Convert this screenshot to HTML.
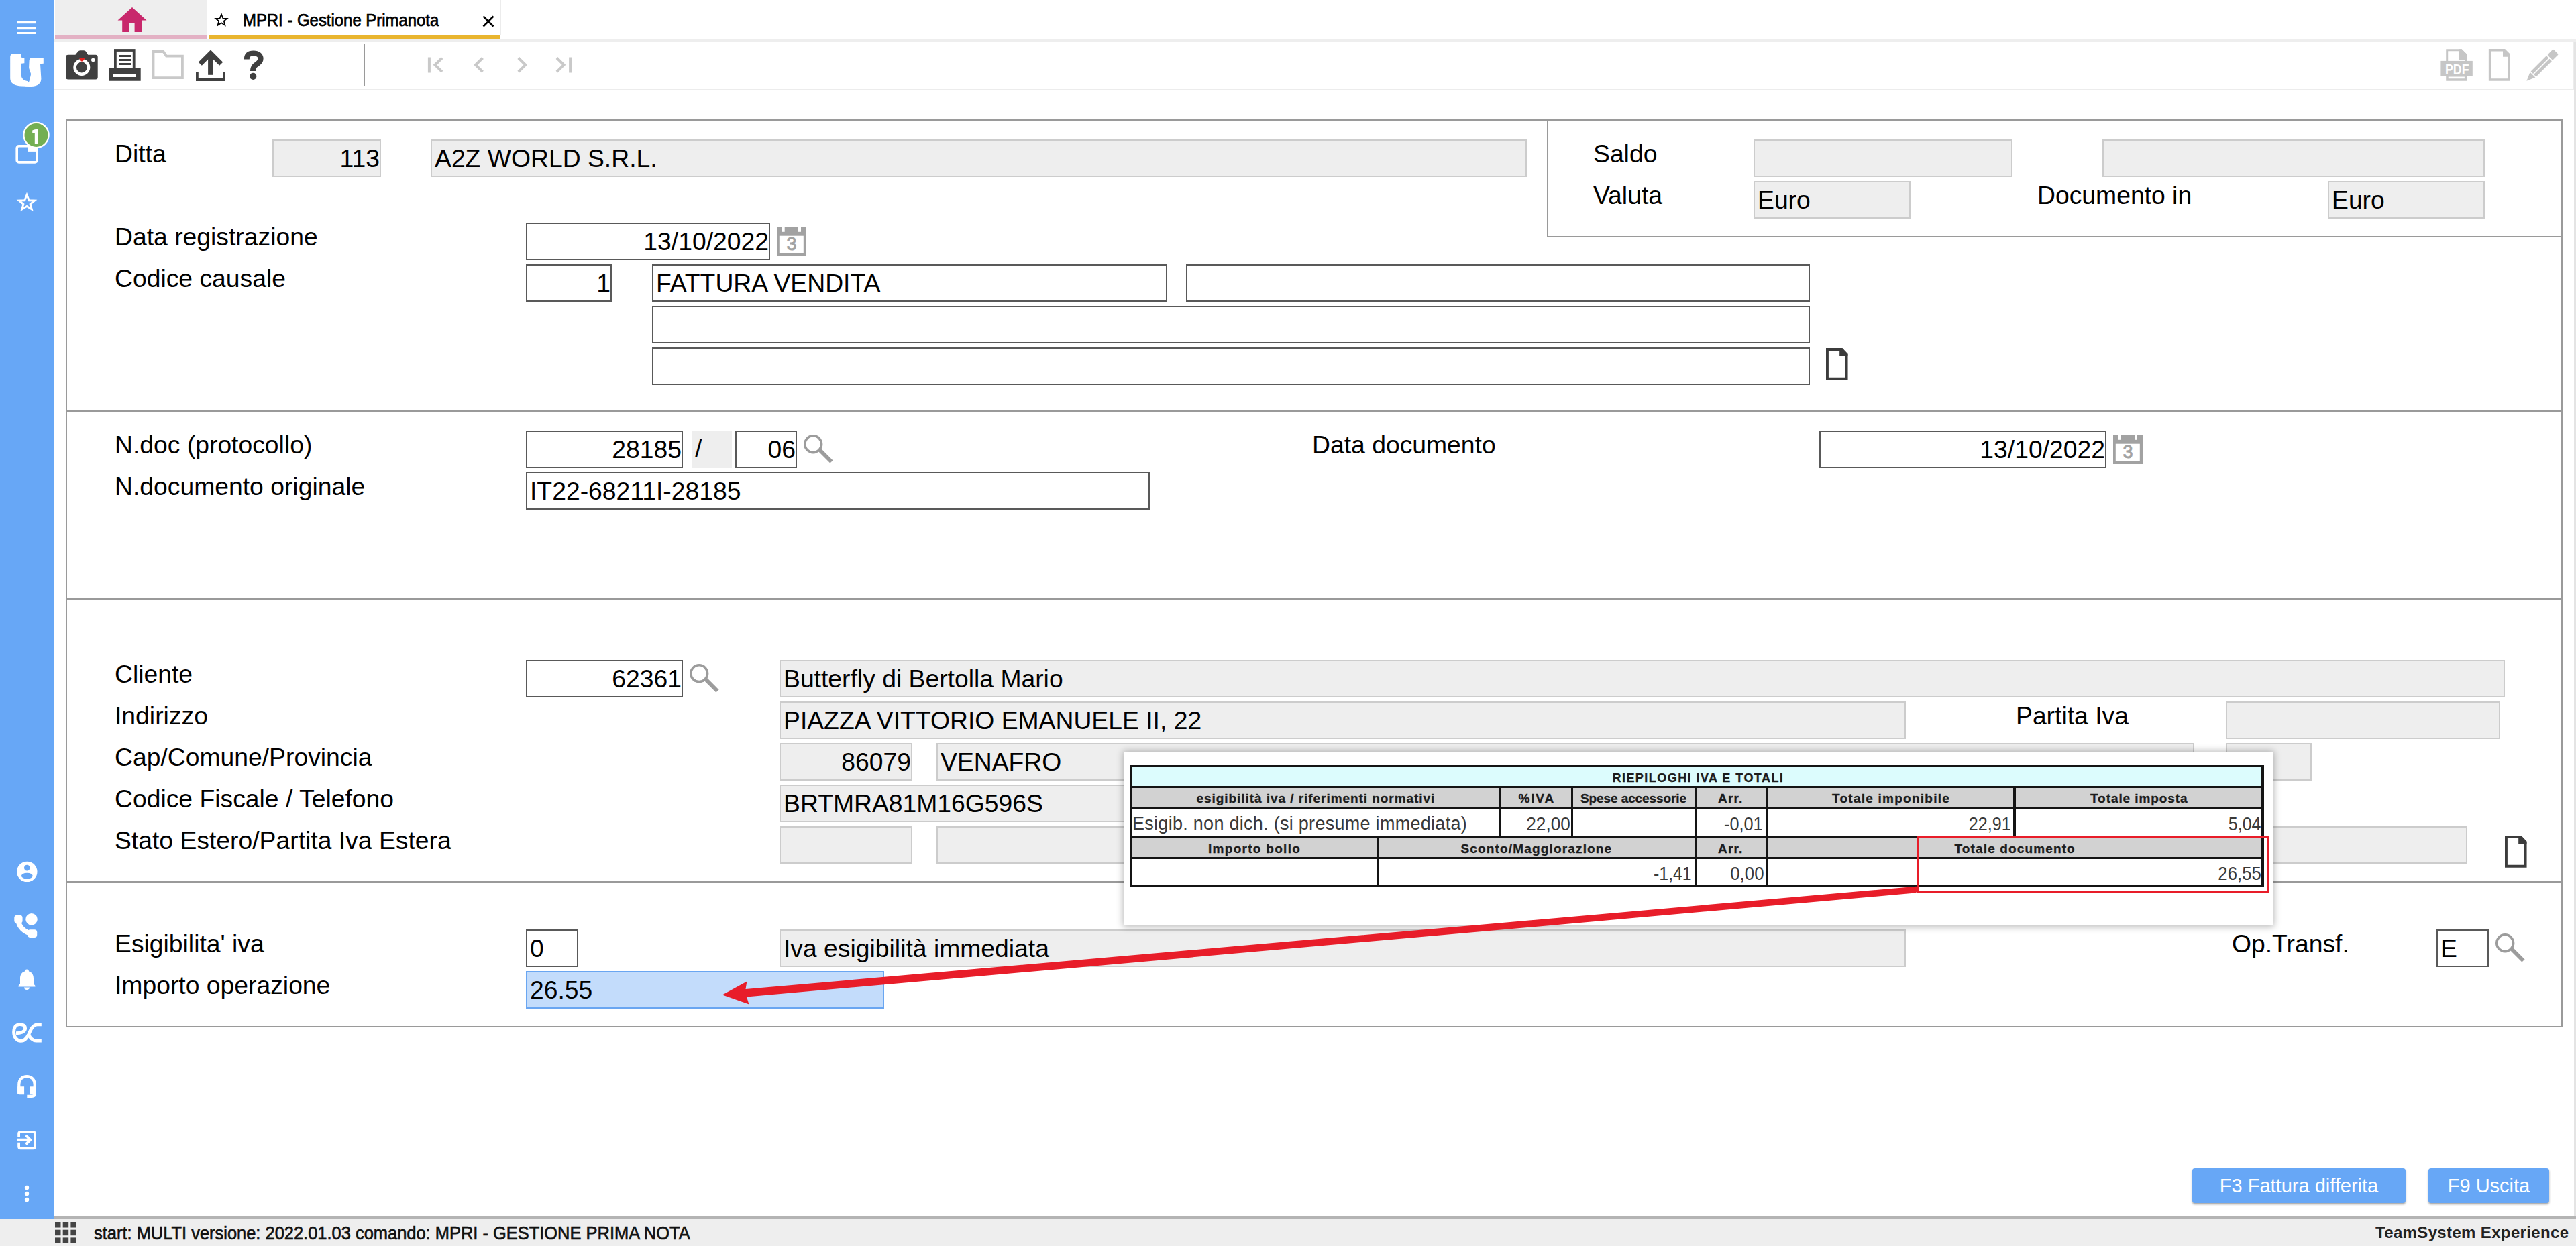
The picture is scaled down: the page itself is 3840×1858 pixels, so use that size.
<!DOCTYPE html><html><head><meta charset="utf-8"><title>MPRI - Gestione Primanota</title><style>
*{margin:0;padding:0;box-sizing:border-box}
html,body{width:3840px;height:1858px;overflow:hidden;background:#fff;font-family:"Liberation Sans",sans-serif;color:#000}
.ab{position:absolute}
.f{position:absolute;height:56px;font-size:37.3px;line-height:52px;padding:0 0 0 4px;white-space:nowrap;overflow:hidden}
.ro{background:#eeeeee;border:2px solid #cccccc}
.ed{background:#fff;border:2px solid #595959}
.r{text-align:right}
.lb{position:absolute;font-size:37.3px;line-height:41px;white-space:nowrap}
.hl{position:absolute;background:#9a9a9a}
</style></head><body>
<div class="ab" style="left:0;top:0;width:80px;height:1817px;background:#67a7f6"></div>
<div class="ab" style="left:0;top:1817px;width:3840px;height:41px;background:#eeeeee"></div>
<div class="ab" style="left:80px;top:1814px;width:3760px;height:3px;background:#b4b4b4"></div>
<div class="ab" style="left:82px;top:0;width:226px;height:58px;background:#eeeeee"></div>
<div class="ab" style="left:82px;top:52px;width:226px;height:6px;background:#e3b1c4"></div>
<div class="ab" style="left:312px;top:52px;width:434px;height:6px;background:#e9b52f"></div>
<div class="ab" style="left:80px;top:58px;width:3760px;height:4px;background:#eeeeee"></div>
<div class="ab" style="left:80px;top:132px;width:3757px;height:2px;background:#ececec"></div>
<div class="ab" style="left:3836px;top:62px;width:1px;height:72px;background:#ececec"></div>
<div class="ab" style="left:3837px;top:62px;width:3px;height:1752px;background:#e4e4e4"></div>
<div class="ab" style="left:746px;top:0;width:1px;height:52px;background:#ececec"></div>
<div class="ab" style="left:542px;top:66px;width:2px;height:62px;background:#9a9a9a"></div>
<div class="ab" style="left:361.5px;top:13.6px;font-size:26.3px;line-height:32px;-webkit-text-stroke:0.75px #000;white-space:nowrap;transform-origin:0 0;transform:scaleX(0.909)">MPRI - Gestione Primanota</div>
<svg class="ab" style="left:20px;top:25px" width="40" height="35" viewBox="20 25 40 35"><rect x="26" y="32" width="28" height="3.2" fill="#fff"/><rect x="26" y="40" width="28" height="3.2" fill="#fff"/><rect x="26" y="47" width="28" height="3.2" fill="#fff"/></svg>
<svg class="ab" style="left:10px;top:75px" width="60" height="60" viewBox="10 75 60 60"><path fill="#fff" d="M15.2,85 C15.2,81.5 17.5,80.3 21,80.3 L31.6,80.3 L31.6,85.6 L36.4,87 L36.4,94.2 L32,94.7 L32,113.5 C32,117 36,120.5 41.7,121.2 L46,128.9 L32,128.4 C22,128.4 15.2,124 15.2,117 Z"/><path fill="#fff" d="M43.6,90 C44,87 46,86 48,86 L64.8,86 L64.8,94.7 L60,95.2 L61.4,117.3 C61.4,124 57,128.9 46.5,128.9 L37,128.6 C42,126 44.1,121 44.1,118.3 C45.5,114 46,112 46,110 C45,106 43.1,103 43.1,100.5 Z"/></svg>
<svg class="ab" style="left:15px;top:175px" width="70" height="75" viewBox="15 175 70 75"><rect x="25.2" y="217.8" width="29.9" height="24.1" rx="3" fill="none" stroke="#fff" stroke-width="3.6"/><rect x="41.5" y="219" width="13.6" height="6.9" fill="#fff"/><circle cx="54" cy="201.5" r="18.6" fill="#74af53" stroke="#fff" stroke-width="2.2"/><path fill="#fff" d="M50.8,193.5 L56.6,192.2 L56.6,214.2 L51.8,214.2 L51.8,198 L48.2,198.6 L48.2,194.5 Z"/></svg>
<svg class="ab" style="left:20px;top:283px" width="40" height="38" viewBox="20 283 40 38"><path transform="translate(40,300.6) scale(0.92) translate(-40,-301.5)" fill="none" stroke="#fff" stroke-width="3.1" stroke-linejoin="miter" d="M40,290.5 L43.6,299.5 L52.5,299.8 L45.5,305.5 L48,314 L40,309 L32,314 L34.5,305.5 L27.5,299.8 L36.4,299.5 Z"/></svg>
<svg class="ab" style="left:20px;top:1280px" width="40" height="40" viewBox="20 1280 40 40"><circle cx="40.3" cy="1299.9" r="15.2" fill="#fff"/><circle cx="40.3" cy="1294.1" r="4.3" fill="#67a7f6"/><ellipse cx="40.3" cy="1306.1" rx="8.4" ry="4.3" fill="#67a7f6"/></svg>
<svg class="ab" style="left:16px;top:1356px" width="46" height="46" viewBox="16 1356 46 46"><circle cx="47" cy="1370.8" r="8.8" fill="#fff"/><path fill="none" stroke="#fff" stroke-width="7.5" d="M27.2,1372 C28,1382 36,1390 48,1392.5"/><rect x="21.3" y="1364.8" width="12.3" height="12" rx="4" fill="#fff"/><rect x="41.2" y="1386.3" width="14" height="11.8" rx="4" fill="#fff"/></svg>
<svg class="ab" style="left:20px;top:1440px" width="40" height="40" viewBox="20 1440 40 40"><path fill="#fff" d="M40,1445.5 C42,1445.5 43,1447 43,1448.5 C48,1450 50,1454 50,1459 L50,1467 L52.5,1470 L52.5,1471.5 L27.5,1471.5 L27.5,1470 L30,1467 L30,1459 C30,1454 32,1450 37,1448.5 C37,1447 38,1445.5 40,1445.5 Z"/><path fill="#fff" d="M36,1472.5 L44,1472.5 C44,1474.5 42.5,1476 40,1476 C37.5,1476 36,1474.5 36,1472.5 Z"/></svg>
<svg class="ab" style="left:14px;top:1518px" width="52" height="42" viewBox="14 1518 52 42"><path fill="none" stroke="#fff" stroke-width="4.9" d="M24,1540.8 C30,1540.8 37.6,1539 37.6,1533.5 C37.6,1528.5 33.5,1527.6 29.5,1527.6 C23,1527.6 20.6,1533 20.6,1539 C20.6,1547 25.5,1552.3 31,1552.3 C37,1552.3 40,1548 43,1542 C46,1535 49,1527.9 56,1527.9 L61.8,1527.9"/><path fill="none" stroke="#fff" stroke-width="4.9" d="M42.3,1541.5 C45,1549 49,1552 54,1552 L61.8,1552"/></svg>
<svg class="ab" style="left:20px;top:1598px" width="40" height="45" viewBox="20 1598 40 45"><path fill="none" stroke="#fff" stroke-width="4.2" d="M28.3,1631 L28.3,1617 C28.3,1609.5 33.5,1605.1 40,1605.1 C46.5,1605.1 51.7,1609.5 51.7,1617 L51.7,1631 C51.7,1633.5 50,1634.8 47.5,1634.8 L40.3,1634.8"/><path fill="#fff" d="M26.2,1620.3 L36.1,1620.3 L36.1,1632.3 L29.5,1632.3 Q26.2,1632.3 26.2,1629 Z"/><rect x="44.4" y="1620.3" width="8" height="12" fill="#fff"/></svg>
<svg class="ab" style="left:20px;top:1680px" width="40" height="40" viewBox="20 1680 40 40"><path fill="none" stroke="#fff" stroke-width="3.8" d="M28.1,1695.4 L28.1,1690.5 Q28.1,1687.9 30.7,1687.9 L49.3,1687.9 Q51.9,1687.9 51.9,1690.5 L51.9,1709.7 Q51.9,1712.3 49.3,1712.3 L30.7,1712.3 Q28.1,1712.3 28.1,1709.7 L28.1,1703.8"/><path fill="none" stroke="#fff" stroke-width="3.8" d="M26,1699.7 L44,1699.7 M38.6,1693 L45.3,1699.7 L38.6,1706.4"/></svg>
<svg class="ab" style="left:30px;top:1762px" width="20" height="34" viewBox="30 1762 20 34"><circle cx="40" cy="1771" r="3.2" fill="#fff"/><circle cx="40" cy="1780" r="3.2" fill="#fff"/><circle cx="40" cy="1789" r="3.2" fill="#fff"/></svg>
<svg class="ab" style="left:78px;top:1818px" width="40" height="40" viewBox="78 1818 40 40"><rect x="82.0" y="1822.0" width="8.5" height="8.5" fill="#444"/><rect x="82.0" y="1833.7" width="8.5" height="8.5" fill="#444"/><rect x="82.0" y="1845.4" width="8.5" height="8.5" fill="#444"/><rect x="93.7" y="1822.0" width="8.5" height="8.5" fill="#444"/><rect x="93.7" y="1833.7" width="8.5" height="8.5" fill="#444"/><rect x="93.7" y="1845.4" width="8.5" height="8.5" fill="#444"/><rect x="105.4" y="1822.0" width="8.5" height="8.5" fill="#444"/><rect x="105.4" y="1833.7" width="8.5" height="8.5" fill="#444"/><rect x="105.4" y="1845.4" width="8.5" height="8.5" fill="#444"/></svg>
<svg class="ab" style="left:170px;top:5px" width="55" height="48" viewBox="170 5 55 48"><path fill="#c8286c" d="M197,11 L218.5,30.5 L211.6,30.5 L211.6,47 L200.6,47 L200.6,34.5 L192.6,34.5 L192.6,47 L182.2,47 L182.2,30.5 L175.5,30.5 Z"/></svg>
<svg class="ab" style="left:315px;top:15px" width="30" height="30" viewBox="315 15 30 30"><path transform="translate(330,29.6) scale(0.9) translate(-330,-29.6)" fill="none" stroke="#000" stroke-width="1.9" stroke-linejoin="miter" d="M330,20.5 L332.6,27.3 L339.5,27.5 L334.2,31.8 L336,38.8 L330,34.8 L324,38.8 L325.8,31.8 L320.5,27.5 L327.4,27.3 Z"/></svg>
<svg class="ab" style="left:715px;top:19px" width="26" height="26" viewBox="715 19 26 26"><path stroke="#000" stroke-width="2.6" d="M720.5,24.5 L735.5,39.5 M735.5,24.5 L720.5,39.5"/></svg>
<svg class="ab" style="left:95px;top:70px" width="56" height="52" viewBox="95 70 56 52"><path fill="#404040" d="M101.5,81.7 L112.4,81.7 L116.5,76.8 Q117.5,75.2 119.5,75.2 L125,75.2 Q127,75.2 128,76.8 L131.2,81.7 L142.5,81.7 Q145.7,81.7 145.7,85 L145.7,115.3 Q145.7,118.5 142.5,118.5 L101.5,118.5 Q98.3,118.5 98.3,115.3 L98.3,85 Q98.3,81.7 101.5,81.7 Z"/><circle cx="121.8" cy="100.5" r="10.2" fill="none" stroke="#fff" stroke-width="4.6"/><circle cx="138.8" cy="89.5" r="2.8" fill="#fff"/><path fill="#e4201e" d="M117.5,86 L127,86 L123.5,91.5 L121,91.5 Z"/></svg>
<svg class="ab" style="left:158px;top:68px" width="56" height="56" viewBox="158 68 56 56"><rect x="171.9" y="75" width="27.8" height="28" fill="none" stroke="#404040" stroke-width="3.8"/><path stroke="#404040" stroke-width="2.8" d="M177,83.5 L195,83.5 M177,89.5 L195,89.5 M177,95.5 L195,95.5"/><path fill="#404040" fill-rule="evenodd" d="M162.2,101 L209.7,101 L209.7,120.8 L162.2,120.8 Z M168.8,110.4 L203,110.4 L203,115.1 L168.8,115.1 Z"/></svg>
<svg class="ab" style="left:222px;top:71px" width="56" height="52" viewBox="222 71 56 52"><path fill="none" stroke="#c9c9c9" stroke-width="3.8" d="M228.5,77 L243.5,77 L248,83.6 L271.9,83.6 L271.9,116.1 L228.5,116.1 Z"/></svg>
<svg class="ab" style="left:288px;top:70px" width="52" height="54" viewBox="288 70 52 54"><path fill="none" stroke="#404040" stroke-width="7.2" d="M298.3,95.3 L314,79.6 L329.7,95.3"/><rect x="310.1" y="80" width="7.7" height="31.8" fill="#404040"/><path fill="none" stroke="#404040" stroke-width="3.8" d="M293.9,107.3 L293.9,119 L334.1,119 L334.1,107.3"/></svg>
<svg class="ab" style="left:358px;top:70px" width="40" height="54" viewBox="358 70 40 54"><path fill="none" stroke="#404040" stroke-width="8" d="M367.8,88.5 C367.8,81 372,79.5 378,79.5 C384.5,79.5 388.6,82.5 388.6,87.5 C388.6,93.5 383,95 380,98 C377.5,100.5 377,102.5 377,106"/><circle cx="377.3" cy="113.8" r="5.1" fill="#404040"/></svg>
<svg class="ab" style="left:630px;top:78px" width="230" height="38" viewBox="630 78 230 38"><g fill="none" stroke="#c9c9c9" stroke-width="4"><path d="M639.9,85.5 L639.9,108.5"/><path d="M659,86.5 L648.5,96.8 L659,107.2"/><path d="M719.5,86.5 L709,96.8 L719.5,107.2"/><path d="M772.8,86.5 L783.3,96.8 L772.8,107.2"/><path d="M830,86.5 L840.5,96.8 L830,107.2"/><path d="M850.1,85.5 L850.1,108.5"/></g></svg>
<svg class="ab" style="left:3634px;top:68px" width="56" height="58" viewBox="3634 68 56 58"><path fill="none" stroke="#c6c6c6" stroke-width="3" d="M3647.7,92 L3647.7,74.7 L3669,74.7 L3676,81.7 L3676,92"/><path fill="#c6c6c6" d="M3666,73.2 L3669.5,73.2 L3677.5,81.5 L3677.5,88.9 L3666,88.9 Z"/><rect x="3638.4" y="90.9" width="47.4" height="22.2" fill="#c6c6c6"/><text x="3645" y="110.6" font-family="Liberation Sans" font-weight="bold" font-size="22" fill="#fff" textLength="35.5" lengthAdjust="spacingAndGlyphs">PDF</text><path fill="#c6c6c6" fill-rule="evenodd" d="M3646.2,113 L3677.5,113 L3677.5,120.7 L3646.2,120.7 Z M3649.7,114.6 L3673.9,114.6 L3673.9,117.2 L3649.7,117.2 Z"/></svg>
<svg class="ab" style="left:3705px;top:68px" width="42" height="58" viewBox="3705 68 42 58"><path fill="none" stroke="#c6c6c6" stroke-width="3.5" d="M3711.6,74.8 L3733,74.8 L3740.2,82 L3740.2,119 L3711.6,119 Z"/><path fill="#c6c6c6" d="M3731,73 L3734,73 L3742,81 L3742,84.8 L3731,84.8 Z"/></svg>
<svg class="ab" style="left:3760px;top:68px" width="60" height="58" viewBox="3760 68 60 58"><g fill="#c6c6c6" transform="translate(3766.4,120.7) rotate(-45)"><path d="M0,0 L12.8,-5.6 L12.8,5.6 Z"/><rect x="14.4" y="-5.6" width="33" height="4.8"/><rect x="14.4" y="0.8" width="33" height="4.8"/><rect x="49.2" y="-5.6" width="12.3" height="11.2" rx="1.5"/></g></svg>
<div class="ab" style="left:98px;top:178px;width:3722px;height:1354px;border:2px solid #9a9a9a"></div>
<div class="hl" style="left:98px;top:612px;width:3722px;height:2px"></div>
<div class="hl" style="left:98px;top:892px;width:3722px;height:2px"></div>
<div class="hl" style="left:98px;top:1314px;width:3722px;height:2px"></div>
<div class="hl" style="left:2306px;top:178px;width:2px;height:176px"></div>
<div class="hl" style="left:2306px;top:352px;width:1514px;height:2px"></div>
<div class="lb" style="left:171px;top:209px">Ditta</div>
<div class="lb" style="left:171px;top:333px">Data registrazione</div>
<div class="lb" style="left:171px;top:395px">Codice causale</div>
<div class="lb" style="left:2375px;top:209px">Saldo</div>
<div class="lb" style="left:2375px;top:271px">Valuta</div>
<div class="lb" style="left:3037px;top:271px">Documento in</div>
<div class="f ro r" style="left:406px;top:208px;width:162px;">113</div>
<div class="f ro" style="left:642px;top:208px;width:1634px;">A2Z WORLD S.R.L.</div>
<div class="f ro" style="left:2614px;top:208px;width:386px;"></div>
<div class="f ro" style="left:3134px;top:208px;width:570px;"></div>
<div class="f ro" style="left:2614px;top:270px;width:234px;">Euro</div>
<div class="f ro" style="left:3470px;top:270px;width:234px;">Euro</div>
<div class="f ed r" style="left:784px;top:332px;width:364px;">13/10/2022</div>
<div class="f ed r" style="left:784px;top:394px;width:128px;">1</div>
<div class="f ed" style="left:972px;top:394px;width:768px;">FATTURA VENDITA</div>
<div class="f ed" style="left:1768px;top:394px;width:930px;"></div>
<div class="f ed" style="left:972px;top:456px;width:1726px;"></div>
<div class="f ed" style="left:972px;top:518px;width:1726px;"></div>
<div class="lb" style="left:171px;top:643px">N.doc (protocollo)</div>
<div class="lb" style="left:171px;top:705px">N.documento originale</div>
<div class="lb" style="left:1956px;top:643px">Data documento</div>
<div class="f ed r" style="left:784px;top:642px;width:234px;">28185</div>
<div class="ab" style="left:1031px;top:642px;width:60px;height:56px;background:#eeeeee;font-size:37px;line-height:52px;padding:2px 0 0 5px">/</div>
<div class="f ed r" style="left:1096px;top:642px;width:92px;">06</div>
<div class="f ed" style="left:784px;top:704px;width:930px;">IT22-68211I-28185</div>
<div class="f ed r" style="left:2712px;top:642px;width:428px;">13/10/2022</div>
<div class="lb" style="left:171px;top:985px">Cliente</div>
<div class="lb" style="left:171px;top:1047px">Indirizzo</div>
<div class="lb" style="left:171px;top:1109px">Cap/Comune/Provincia</div>
<div class="lb" style="left:171px;top:1171px">Codice Fiscale / Telefono</div>
<div class="lb" style="left:171px;top:1233px">Stato Estero/Partita Iva Estera</div>
<div class="lb" style="left:3005px;top:1047px">Partita Iva</div>
<div class="f ed r" style="left:784px;top:984px;width:234px;">62361</div>
<div class="f ro" style="left:1162px;top:984px;width:2572px;">Butterfly di Bertolla Mario</div>
<div class="f ro" style="left:1162px;top:1046px;width:1679px;">PIAZZA VITTORIO EMANUELE II, 22</div>
<div class="f ro" style="left:3318px;top:1046px;width:409px;"></div>
<div class="f ro r" style="left:1162px;top:1108px;width:198px;">86079</div>
<div class="f ro" style="left:1396px;top:1108px;width:1875px;">VENAFRO</div>
<div class="f ro" style="left:3318px;top:1108px;width:128px;"></div>
<div class="f ro" style="left:1162px;top:1170px;width:2109px;">BRTMRA81M16G596S</div>
<div class="f ro" style="left:1162px;top:1232px;width:198px;"></div>
<div class="f ro" style="left:1396px;top:1232px;width:2282px;"></div>
<div class="lb" style="left:171px;top:1387px">Esigibilita' iva</div>
<div class="lb" style="left:171px;top:1449px">Importo operazione</div>
<div class="lb" style="left:3327px;top:1387px">Op.Transf.</div>
<div class="f ed" style="left:784px;top:1386px;width:78px;">0</div>
<div class="f ro" style="left:1162px;top:1386px;width:1679px;">Iva esigibilità immediata</div>
<div class="f ed" style="left:3632px;top:1386px;width:78px;">E</div>
<div class="f f2" style="left:784px;top:1448px;width:534px;background:#c3dcfb;border:2px solid #6aa6f1">26.55</div>
<svg class="ab" style="left:1158px;top:338px" width="44" height="44" viewBox="1158 338 44 44"><rect x="1158" y="338" width="44" height="44" fill="#a2a2a2"/><rect x="1161.8" y="351.7" width="36" height="26.2" fill="#fff"/><rect x="1165.9" y="338" width="3.8" height="7.8" fill="#fff"/><rect x="1190" y="338" width="4" height="7.8" fill="#fff"/><text x="1180" y="373.4" font-family="Liberation Sans" font-size="27" fill="#a2a2a2" stroke="#a2a2a2" stroke-width="0.9" text-anchor="middle">3</text></svg>
<svg class="ab" style="left:3150px;top:648px" width="44" height="44" viewBox="3150 648 44 44"><rect x="3150" y="648" width="44" height="44" fill="#a2a2a2"/><rect x="3153.8" y="661.7" width="36" height="26.2" fill="#fff"/><rect x="3157.9" y="648" width="3.8" height="7.8" fill="#fff"/><rect x="3182" y="648" width="4" height="7.8" fill="#fff"/><text x="3172" y="683.4" font-family="Liberation Sans" font-size="27" fill="#a2a2a2" stroke="#a2a2a2" stroke-width="0.9" text-anchor="middle">3</text></svg>
<svg class="ab" style="left:1198px;top:648px" width="46" height="46" viewBox="1198 648 46 46"><circle cx="1212.2" cy="662.2" r="12.4" fill="none" stroke="#9c9c9c" stroke-width="3.6"/><path stroke="#9c9c9c" stroke-width="6" d="M1220.5,669.5 L1239.5,688.5"/></svg>
<svg class="ab" style="left:1028px;top:990px" width="46" height="46" viewBox="1028 990 46 46"><circle cx="1042.2" cy="1004.2" r="12.4" fill="none" stroke="#9c9c9c" stroke-width="3.6"/><path stroke="#9c9c9c" stroke-width="6" d="M1050.5,1011.5 L1069.5,1030.5"/></svg>
<svg class="ab" style="left:3720px;top:1392px" width="46" height="46" viewBox="3720 1392 46 46"><circle cx="3734.2" cy="1406.2" r="12.4" fill="none" stroke="#9c9c9c" stroke-width="3.6"/><path stroke="#9c9c9c" stroke-width="6" d="M3742.5,1413.5 L3761.5,1432.5"/></svg>
<svg class="ab" style="left:2722px;top:519px" width="34" height="49" viewBox="2722 519 34 49"><path fill="none" stroke="#3c3c3c" stroke-width="3.9" d="M2723.95,520.95 L2745.5,520.95 L2752.6,528.2 L2752.6,564.7 L2723.95,564.7 Z"/><path fill="#3c3c3c" d="M2742.2,519 L2746,519 L2754.5,528.5 L2754.5,530.9 Z"/><path fill="#3c3c3c" d="M2742.2,519 L2754.5,530.9 L2742.2,530.9 L2742.2,519 Z"/></svg>
<svg class="ab" style="left:3734px;top:1245.5px" width="34" height="49" viewBox="3734 1245.5 34 49"><path fill="none" stroke="#3c3c3c" stroke-width="3.9" d="M3735.95,1247.45 L3757.5,1247.45 L3764.6,1254.7 L3764.6,1291.2 L3735.95,1291.2 Z"/><path fill="#3c3c3c" d="M3754.2,1245.5 L3758,1245.5 L3766.5,1255.0 L3766.5,1257.4 Z"/><path fill="#3c3c3c" d="M3754.2,1245.5 L3766.5,1257.4 L3754.2,1257.4 L3754.2,1245.5 Z"/></svg>
<div class="ab" style="left:1676px;top:1122px;width:1712px;height:258px;background:#fff;box-shadow:0 0 10px 2px rgba(0,0,0,.28)"></div>
<div class="ab" style="left:1684.5px;top:1140.5px;width:1690.5px;height:182.5px;background:#141414"></div>
<div class="ab" style="left:1687.8px;top:1144px;width:1683.7px;height:28px;background:#dcfcfd"></div>
<div class="ab" style="left:1687.8px;top:1175px;width:1683.7px;height:29px;background:#d2d2d2"></div>
<div class="ab" style="left:1687.8px;top:1207px;width:1683.7px;height:39.5px;background:#ffffff"></div>
<div class="ab" style="left:1687.8px;top:1249.5px;width:1683.7px;height:28.5px;background:#d2d2d2"></div>
<div class="ab" style="left:1687.8px;top:1281px;width:1683.7px;height:38.5px;background:#ffffff"></div>
<div class="ab" style="left:2235px;top:1172px;width:3.4px;height:77.5px;background:#141414"></div>
<div class="ab" style="left:2341.5px;top:1172px;width:3.4px;height:77.5px;background:#141414"></div>
<div class="ab" style="left:2525.5px;top:1172px;width:3.4px;height:77.5px;background:#141414"></div>
<div class="ab" style="left:2632px;top:1172px;width:3.4px;height:77.5px;background:#141414"></div>
<div class="ab" style="left:3001.3px;top:1172px;width:3.4px;height:77.5px;background:#141414"></div>
<div class="ab" style="left:2052px;top:1246.5px;width:3.4px;height:76.5px;background:#141414"></div>
<div class="ab" style="left:2525.5px;top:1246.5px;width:3.4px;height:76.5px;background:#141414"></div>
<div class="ab" style="left:2632px;top:1246.5px;width:3.4px;height:76.5px;background:#141414"></div>
<div class="ab" style="left:2857px;top:1246.5px;width:3.4px;height:76.5px;background:#141414"></div>
<div class="ab" style="left:2403.5px;top:1151.06px;font-size:18px;line-height:18px;font-weight:bold;color:#1c1c1c;letter-spacing:1.455px;white-space:nowrap;-webkit-text-stroke:0.35px #1c1c1c;">RIEPILOGHI IVA E TOTALI</div>
<div class="ab" style="left:1783.5px;top:1181.42px;font-size:19px;line-height:19px;font-weight:bold;color:#1c1c1c;letter-spacing:0.947px;white-space:nowrap;-webkit-text-stroke:0.35px #1c1c1c;">esigibilità iva / riferimenti normativi</div>
<div class="ab" style="left:2263.5px;top:1181.42px;font-size:19px;line-height:19px;font-weight:bold;color:#1c1c1c;letter-spacing:1.833px;white-space:nowrap;-webkit-text-stroke:0.35px #1c1c1c;">%IVA</div>
<div class="ab" style="left:2356px;top:1181.42px;font-size:19px;line-height:19px;font-weight:bold;color:#1c1c1c;letter-spacing:-0.1px;white-space:nowrap;-webkit-text-stroke:0.35px #1c1c1c;">Spese accessorie</div>
<div class="ab" style="left:2561px;top:1181.42px;font-size:19px;line-height:19px;font-weight:bold;color:#1c1c1c;letter-spacing:1.167px;white-space:nowrap;-webkit-text-stroke:0.35px #1c1c1c;">Arr.</div>
<div class="ab" style="left:2731px;top:1181.42px;font-size:19px;line-height:19px;font-weight:bold;color:#1c1c1c;letter-spacing:1.25px;white-space:nowrap;-webkit-text-stroke:0.35px #1c1c1c;">Totale imponibile</div>
<div class="ab" style="left:3116px;top:1181.42px;font-size:19px;line-height:19px;font-weight:bold;color:#1c1c1c;letter-spacing:0.923px;white-space:nowrap;-webkit-text-stroke:0.35px #1c1c1c;">Totale imposta</div>
<div class="ab" style="left:1801px;top:1256.22px;font-size:19px;line-height:19px;font-weight:bold;color:#1c1c1c;letter-spacing:1.292px;white-space:nowrap;-webkit-text-stroke:0.35px #1c1c1c;">Importo bollo</div>
<div class="ab" style="left:2177.5px;top:1256.22px;font-size:19px;line-height:19px;font-weight:bold;color:#1c1c1c;letter-spacing:1.158px;white-space:nowrap;-webkit-text-stroke:0.35px #1c1c1c;">Sconto/Maggiorazione</div>
<div class="ab" style="left:2561px;top:1256.22px;font-size:19px;line-height:19px;font-weight:bold;color:#1c1c1c;letter-spacing:1.167px;white-space:nowrap;-webkit-text-stroke:0.35px #1c1c1c;">Arr.</div>
<div class="ab" style="left:2913.5px;top:1256.22px;font-size:19px;line-height:19px;font-weight:bold;color:#1c1c1c;letter-spacing:1.133px;white-space:nowrap;-webkit-text-stroke:0.35px #1c1c1c;">Totale documento</div>
<div class="ab" style="left:1688px;top:1215.44px;font-size:27px;line-height:27px;font-weight:normal;color:#3a3a3a;letter-spacing:0.282px;white-space:nowrap;">Esigib. non dich. (si presume immediata)</div>
<div class="ab" style="right:1499.6px;top:1214.52px;font-size:27.5px;line-height:27.5px;font-weight:normal;color:#3a3a3a;letter-spacing:0px;white-space:nowrap;transform:scaleX(0.9525);transform-origin:right 0;">22,00</div>
<div class="ab" style="right:1212.0px;top:1214.52px;font-size:27.5px;line-height:27.5px;font-weight:normal;color:#3a3a3a;letter-spacing:0px;white-space:nowrap;transform:scaleX(0.92);transform-origin:right 0;">-0,01</div>
<div class="ab" style="right:842.3px;top:1214.52px;font-size:27.5px;line-height:27.5px;font-weight:normal;color:#3a3a3a;letter-spacing:0px;white-space:nowrap;transform:scaleX(0.9149);transform-origin:right 0;">22,91</div>
<div class="ab" style="right:469.6px;top:1214.52px;font-size:27.5px;line-height:27.5px;font-weight:normal;color:#3a3a3a;letter-spacing:0px;white-space:nowrap;transform:scaleX(0.9104);transform-origin:right 0;">5,04</div>
<div class="ab" style="right:1318.3px;top:1289.22px;font-size:27.5px;line-height:27.5px;font-weight:normal;color:#3a3a3a;letter-spacing:0px;white-space:nowrap;transform:scaleX(0.9035);transform-origin:right 0;">-1,41</div>
<div class="ab" style="right:1210.3px;top:1289.22px;font-size:27.5px;line-height:27.5px;font-weight:normal;color:#3a3a3a;letter-spacing:0px;white-space:nowrap;transform:scaleX(0.9391);transform-origin:right 0;">0,00</div>
<div class="ab" style="right:469.6px;top:1289.22px;font-size:27.5px;line-height:27.5px;font-weight:normal;color:#3a3a3a;letter-spacing:0px;white-space:nowrap;transform:scaleX(0.9375);transform-origin:right 0;">26,55</div>
<div class="ab" style="left:2857px;top:1245.8px;width:526px;height:85.7px;border:3.6px solid #e81d29"></div>
<svg class="ab" style="left:1060px;top:1300px" width="1820" height="220" viewBox="1060 1300 1820 220"><path fill="#e81d29" d="M2856.5,1321.8 L2858.5,1324 L2857.5,1330 L2855,1331.5 L1113,1486.5 L1116.5,1497.6 L1076.8,1483.4 L1113.4,1463.5 L1111.5,1475 Z"/></svg>
<div class="ab" style="left:3268px;top:1742px;width:318px;height:52px;background:#67a7f6;border-radius:4px;box-shadow:0 2px 3px rgba(0,0,0,.35);color:#fff;font-size:29px;line-height:52px;text-align:center">F3 Fattura differita</div>
<div class="ab" style="left:3620px;top:1742px;width:180px;height:52px;background:#67a7f6;border-radius:4px;box-shadow:0 2px 3px rgba(0,0,0,.35);color:#fff;font-size:29px;line-height:52px;text-align:center">F9 Uscita</div>
<div class="ab" style="left:139.8px;top:1822.2px;font-size:27px;line-height:34px;-webkit-text-stroke:0.7px #111;white-space:nowrap;color:#111;transform-origin:0 0;transform:scaleX(0.9425)">start: MULTI versione: 2022.01.03 comando: MPRI - GESTIONE PRIMA NOTA</div>
<div class="ab" style="left:3541px;top:1823px;font-size:24px;line-height:30px;font-weight:bold;white-space:nowrap;color:#222;letter-spacing:0.35px">TeamSystem Experience</div>
</body></html>
